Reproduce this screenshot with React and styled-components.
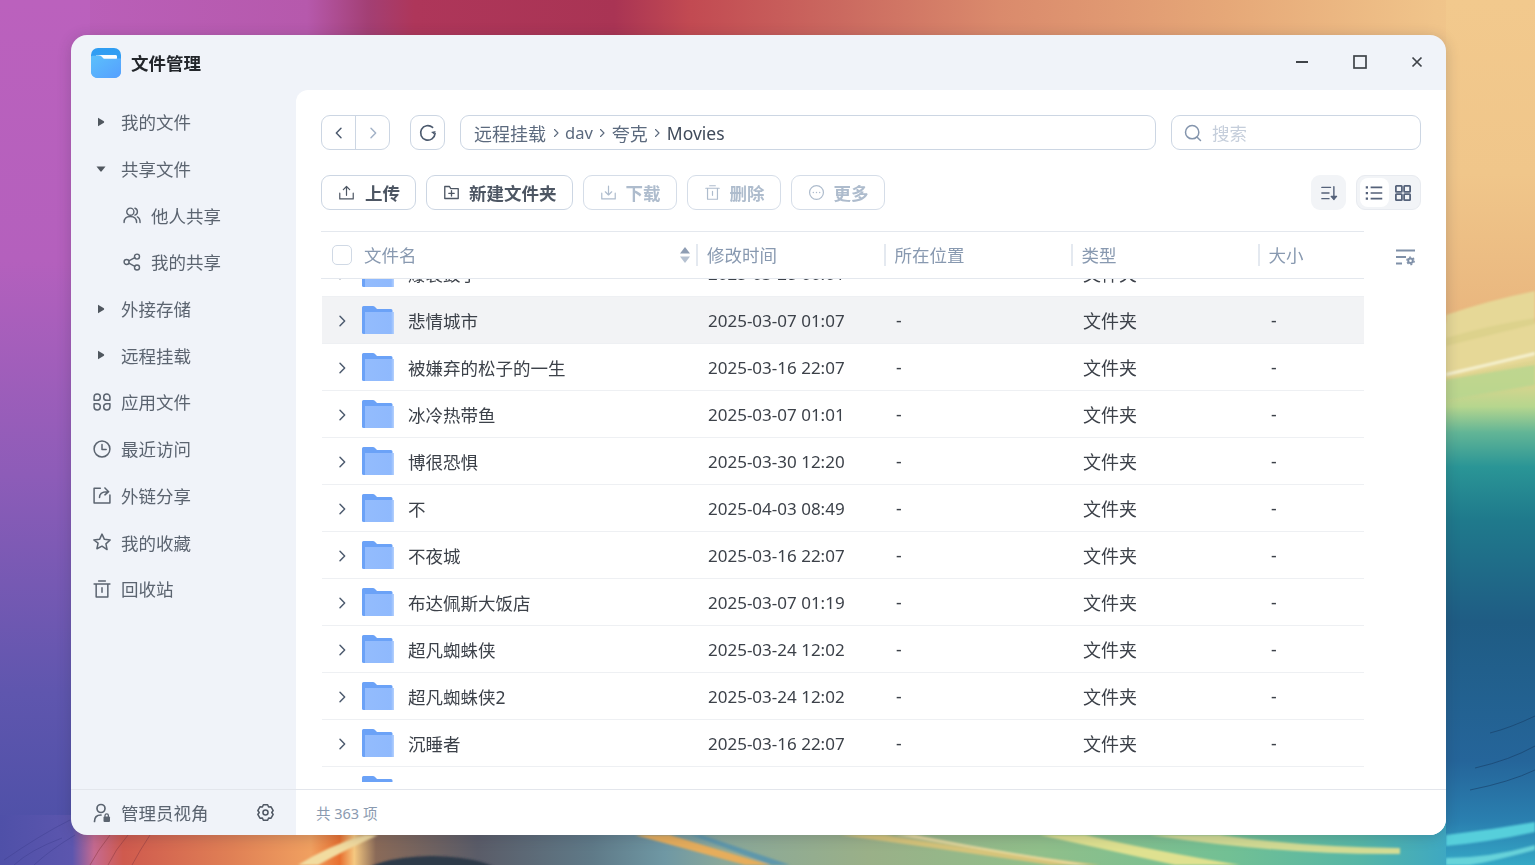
import React from "react";
import styled, { createGlobalStyle } from "styled-components";

const Global = createGlobalStyle`
  html, body { margin: 0; padding: 0; height: 100%; overflow: hidden; }
  body { font-family: "Noto Sans", "Noto Sans CJK SC", sans-serif; font-size: 17.5px; background: #4f50a8; }
  * { box-sizing: border-box; }
`;

const Desktop = styled.div`
  position: relative;
  height: 865px;
  padding: 35px 89px 30px 71px;
`;
const WallpaperSvg = styled.svg`
  position: absolute;
  left: 0;
  top: 0;
  width: 1535px;
  height: 865px;
`;
const Window = styled.div`
  position: relative;
  height: 800px;
  display: flex;
  flex-direction: column;
  background: #f0f3f9;
  border-radius: 16px;
  overflow: hidden;
  box-shadow: 0 2px 14px rgba(40, 40, 60, 0.22);
`;
const TitleBar = styled.header`
  height: 55px;
  flex: none;
  display: flex;
  align-items: center;
  padding: 0 20px;
`;
const AppName = styled.div`
  margin-left: 10px;
  font-weight: 700;
  color: #23262b;
  flex: 1;
`;
const WinButton = styled.button`
  width: 57.5px;
  height: 40px;
  padding: 0;
  border: 0;
  background: none;
  display: flex;
  align-items: center;
  justify-content: center;
  color: #3f4349;
`;
const WinControls = styled.div`
  display: flex;
  margin-right: -20px;
  margin-top: -2px;
`;
const Body = styled.div`
  flex: 1;
  min-height: 0;
  display: flex;
`;
const Sidebar = styled.nav`
  width: 225px;
  flex: none;
  padding-top: 8.5px;
`;
const NavItem = styled.div`
  height: 46.7px;
  display: flex;
  align-items: center;
  gap: ${(p) => (p.$tri ? 12 : 9)}px;
  padding-left: ${(p) => (p.$sub ? 51 : p.$tri ? 22 : 21)}px;
  color: #5b6470;
  svg { flex: none; }
`;
const Content = styled.main`
  flex: 1;
  min-width: 0;
  background: #fff;
  border-top-left-radius: 12px;
  padding: 25px 25px 0;
  display: flex;
  flex-direction: column;
`;
const TopRow = styled.div`
  display: flex;
  align-items: stretch;
  height: 35px;
  flex: none;
`;
const NavGroup = styled.div`
  width: 69px;
  display: flex;
  border: 1px solid #ccd6e3;
  border-radius: 9px;
`;
const NavBtn = styled.div`
  flex: 1;
  display: flex;
  align-items: center;
  justify-content: center;
  color: ${(p) => (p.$off ? "#a3b2c7" : "#4c5a6e")};
  & + & { border-left: 1px solid #ccd6e3; }
`;
const Refresh = styled.div`
  width: 35px;
  margin-left: 20px;
  display: flex;
  align-items: center;
  justify-content: center;
  border: 1px solid #ccd6e3;
  border-radius: 9px;
  color: #4c5a6e;
`;
const Breadcrumb = styled.div`
  flex: 1;
  margin-left: 15px;
  border: 1px solid #ccd6e3;
  border-radius: 9px;
  display: flex;
  align-items: center;
  padding-left: 13px;
  gap: 3.5px;
  color: #5c6a7e;
`;
const Crumb = styled.span`
  color: ${(p) => (p.$last ? "#3f4a5a" : "#5c6a7e")};
  font-size: ${(p) => p.$size ?? 18}px;
`;
const Sep = styled.span`
  display: flex;
  color: #5c6a7e;
`;
const Search = styled.div`
  width: 250px;
  margin-left: 15px;
  border: 1px solid #ccd6e3;
  border-radius: 9px;
  display: flex;
  align-items: center;
  padding-left: 11px;
  gap: 9px;
  color: #c5cedb;
  svg { color: #8495ad; }
`;
const ActionRow = styled.div`
  margin-top: 25px;
  height: 35px;
  flex: none;
  display: flex;
  gap: 10px;
`;
const ActionBtn = styled.div`
  display: flex;
  align-items: center;
  gap: ${(p) => p.$gap ?? 9}px;
  padding: 0 15px 0 16px;
  border: 1px solid ${(p) => (p.$off ? "#d5dde8" : "#ccd6e3")};
  border-radius: 9px;
  font-weight: 700;
  color: ${(p) => (p.$off ? "#aebccd" : "#4d5663")};
`;
const Spacer = styled.div`
  flex: 1;
`;
const SortBtn = styled.div`
  width: 35px;
  background: #f2f4f7;
  border-radius: 9px;
  display: flex;
  align-items: center;
  justify-content: center;
  color: #55627a;
`;
const ViewToggle = styled.div`
  width: 65px;
  background: #f2f4f7;
  border: 1px solid #e8ebf0;
  border-radius: 9px;
  padding: 2px 3px;
  display: flex;
  color: #55627a;
`;
const ViewBtn = styled.div`
  width: 30px;
  border-radius: 8px;
  background: ${(p) => (p.$on ? "#fff" : "transparent")};
  display: flex;
  align-items: center;
  justify-content: center;
`;
const TableArea = styled.div`
  margin-top: 21px;
  flex: 1;
  min-height: 0;
  display: flex;
`;
const Table = styled.div`
  width: 1043px;
  flex: none;
  display: flex;
  flex-direction: column;
`;
const SideTool = styled.div`
  flex: 1;
  height: 47px;
  display: flex;
  align-items: center;
  justify-content: flex-end;
  padding: 4px 5px 0 0;
  color: #7f90a8;
`;
const HeadRow = styled.div`
  height: 48px;
  flex: none;
  display: grid;
  grid-template-columns: 375px 187.500px 187px 187px 1fr;
  align-items: center;
  border-top: 1px solid #e4e8ee;
  border-bottom: 1px solid #e4e8ee;
  color: #8899b0;
`;
const HeadCell = styled.div`
  height: 22px;
  display: flex;
  align-items: center;
  padding-left: 9px;
  line-height: 22px;
  border-left: ${(p) => (p.$first ? "0" : "2px solid #e4e9f0")};
`;
const Check = styled.span`
  width: 20px;
  height: 20px;
  flex: none;
  border: 1.5px solid #d0d9e5;
  border-radius: 5px;
  margin-left: 2px;
  margin-right: 12px;
`;
const SortArrows = styled.svg`
  margin-left: auto;
  margin-right: 5px;
`;
const ListViewport = styled.div`
  height: 503px;
  flex: none;
  overflow: hidden;
`;
const List = styled.div`
  margin-top: -29px;
  padding-left: 1px;
`;
const Row = styled.div`
  height: 47px;
  display: grid;
  grid-template-columns: 375px 187px 187px 187px 1fr;
  align-items: center;
  border-bottom: 1px solid #eef0f3;
  background: ${(p) => (p.$hover ? "#f2f3f5" : "#fff")};
  color: #3c4149;
`;
const NameCell = styled.div`
  display: flex;
  align-items: center;
  padding-left: 12px;
  svg { flex: none; }
`;
const Chevron = styled.span`
  display: flex;
  color: #4c5a6e;
  margin-right: 12px;
  padding-top: 1px;
`;
const FolderName = styled.span`
  margin-left: 14px;
`;
const Cell = styled.div`
  padding-left: ${(p) => p.$pad ?? 12}px;
  font-size: ${(p) => p.$size ?? 17.5}px;
`;
const Footer = styled.footer`
  height: 46px;
  flex: none;
  display: flex;
  border-top: 1px solid #e3e6ec;
`;
const FootSide = styled.div`
  width: 225px;
  flex: none;
  display: flex;
  align-items: center;
  padding-left: 22px;
  gap: 10px;
  color: #5b6470;
`;
const FootGear = styled.span`
  display: flex;
  margin-left: 37px;
  color: #4f5763;
`;
const Status = styled.div`
  flex: 1;
  background: #fff;
  display: flex;
  align-items: center;
  padding-left: 20px;
  font-size: 14.5px;
  color: #8a9ab0;
`;

const Ic = ({ size = 20, w = 1.7, vb = 24, children, fill = "none" }) => (
  <svg width={size} height={size} viewBox={`0 0 ${vb} ${vb}`} fill={fill} stroke={fill === "none" ? "currentColor" : "none"} strokeWidth={w} strokeLinecap="round" strokeLinejoin="round">
    {children}
  </svg>
);

const TriRight = () => (
  <svg width="16" height="16" viewBox="0 0 16 16"><path d="M5 3.800 L10.900 7.300 Q11.500 8 10.900 8.700 L5 12.200 Z" fill="#50575f" /></svg>
);
const TriDown = () => (
  <svg width="16" height="16" viewBox="0 0 16 16"><path d="M3.500 5.500 H12.500 L8.700 10.300 Q8 11 7.300 10.300 Z" fill="#50575f" /></svg>
);
const Users = () => (
  <Ic><circle cx="10" cy="8" r="4.300" /><path d="M2.500 21c0-4.400 3-7.200 7.500-7.200s7.500 2.800 7.500 7.200" /><path d="M15.500 3.900a4.300 4.300 0 0 1 0 8.200M18.500 14.300c2 1 3.200 3.300 3.200 6.700" /></Ic>
);
const Share = () => (
  <Ic><circle cx="18" cy="5.500" r="3" /><circle cx="5.500" cy="12" r="3" /><circle cx="18" cy="18.500" r="3" /><path d="m8.200 10.600 7.200-3.800M8.200 13.400l7.200 3.800" /></Ic>
);
const Apps = () => (
  <Ic w={1.8}>
    <path d="M2.500 6.250a3.750 3.750 0 1 1 3.750 3.750H2.500zM21.500 6.250a3.750 3.750 0 1 0-3.750 3.750h3.750zM2.500 17.750a3.750 3.750 0 1 0 3.750-3.750H2.500zM21.500 17.750a3.750 3.750 0 1 1-3.750-3.750h3.750z" />
  </Ic>
);
const Clock = () => (
  <Ic w={1.8}><circle cx="12" cy="12" r="9.500" /><path d="M12 6.500V12.500H17" /></Ic>
);
const LinkShare = () => (
  <Ic w={1.8}><path d="M10 4H2.500V21.500H21.500V12" /><path d="M9 15c0-4 2.500-7 9-7M15.500 3.500 20 8l-4.500 3.800" /></Ic>
);
const Star = () => (
  <Ic w={1.8}><path d="m12 2.500 2.900 6.300 6.900.8-5.100 4.700 1.400 6.800L12 17l-6.100 3.100 1.400-6.800L2.200 9.600l6.900-.8z" /></Ic>
);
const Trash = () => (
  <Ic w={1.8}><path d="M2.500 6H21.500M8 2.500H16M5 6V21.500H19V6M12 10.500V16" /></Ic>
);
const ChevL = () => <Ic size={16} w={2.2}><path d="m15 5-7 7 7 7" /></Ic>;
const ChevR = () => <Ic size={16} w={2.2}><path d="m9 5 7 7-7 7" /></Ic>;
const Crumbsep = () => <Ic size={12} w={2.2}><path d="m9 5 7 7-7 7" /></Ic>;
const RefreshIc = () => (
  <Ic size={20} w={2}><path d="M20.500 12.500A8.700 8.700 0 1 1 17.500 5.300" /><path d="M21.300 9.500 19 13.500l-3.300-2.800" fill="currentColor" stroke="none" /></Ic>
);
const SearchIc = () => <Ic size={20} w={1.8}><circle cx="11" cy="11" r="8" /><path d="m17 17 4 4" /></Ic>;
const Upload = () => <Ic size={17}><path d="M2.500 13v8h19v-8M12 16V3.500M7.500 8 12 3.500 16.500 8" /></Ic>;
const NewFolder = () => <Ic size={17} w={1.9}><path d="M2.500 20.500V3.500H9L11 6.500H21.500V20.500ZM12 9.500V17M8.200 13.200H15.800" /></Ic>;
const Download = () => <Ic size={17}><path d="M2.500 13v8h19v-8M12 3v12.500M7.500 11 12 15.500 16.500 11" /></Ic>;
const TrashBtn = () => <Ic size={17}><path d="M2.500 6H21.500M8 2.500H16M5 6V21.500H19V6M12 10.500V16" /></Ic>;
const More = () => (
  <Ic size={17}><circle cx="12" cy="12" r="9.800" /><path d="M7.500 12h.01M12 12h.01M16.500 12h.01" strokeWidth="2" /></Ic>
);
const SortIc = () => (
  <Ic size={18} w={1.9}><path d="M2.500 4.500H14M2.500 12H12M2.500 19.500H12M18.500 3.500V20" /><path d="m15 16.500 3.500 4 3.500-4z" fill="currentColor" /></Ic>
);
const ListIc = () => (
  <svg width="18" height="18" viewBox="0 0 24 24" fill="none" stroke="currentColor" strokeWidth="2.300">
    <path d="M7.500 4.500H23M7.500 12H23M7.500 19.500H23" />
    <path d="M1 4.500H4M1 12H4M1 19.500H4" strokeWidth="3" />
  </svg>
);
const GridIc = () => (
  <Ic size={18} w={2.4}><rect x="2.500" y="2.500" width="8" height="8" rx=".8" /><rect x="13.500" y="2.500" width="8" height="8" rx=".8" /><rect x="2.500" y="13.500" width="8" height="8" rx=".8" /><rect x="13.500" y="13.500" width="8" height="8" rx=".8" /></Ic>
);
const ColumnGear = () => (
  <svg width="21" height="18" viewBox="0 0 21 18" fill="none" stroke="currentColor" strokeWidth="1.800">
    <path d="M1 2.500H20M1 9H11M1 15.500H7" />
    <circle cx="15.500" cy="12.800" r="2.300" strokeWidth="2" />
    <circle cx="15.500" cy="12.800" r="3.700" strokeWidth="1.400" strokeDasharray="2 1.880" />
  </svg>
);
const AdminIc = () => (
  <svg width="18" height="20" viewBox="0 0 18 20" fill="none" stroke="currentColor" strokeWidth="1.700" strokeLinecap="round">
    <circle cx="8" cy="5.500" r="4" />
    <path d="M1.500 18.500c0-4.500 2.500-6.500 6.500-6.500" />
    <rect x="10.500" y="13.500" width="6.500" height="5.500" rx="1" fill="currentColor" stroke="none" />
    <path d="M12 13.500v-1a1.700 1.700 0 0 1 3.400 0v1" strokeWidth="1.300" />
  </svg>
);
const Gear = () => (
  <Ic size={19} w={1.9}>
    <circle cx="12" cy="12" r="3.200" />
    <path d="M9.300 2.300h5.400l1.200 2.800 3.100-.3 2.700 4.700L19.900 12l1.800 2.500-2.700 4.700-3.100-.3-1.200 2.800H9.300l-1.200-2.800-3.100.3-2.700-4.700L4.100 12 2.300 9.500 5 4.800l3.100.3z" />
  </Ic>
);

const Logo = () => (
  <svg width="30" height="30" viewBox="0 0 30 30">
    <defs>
      <linearGradient id="lg" x1="0" y1="0" x2="0" y2="1">
        <stop offset="0" stopColor="#2f9df2" />
        <stop offset="1" stopColor="#3e9ff5" />
      </linearGradient>
      <linearGradient id="lf" x1="0" y1="0" x2="1" y2="1">
        <stop offset="0" stopColor="#5cc0fb" />
        <stop offset="1" stopColor="#559fff" />
      </linearGradient>
    </defs>
    <rect width="30" height="30" rx="7" fill="url(#lg)" />
    <path d="M5 7.500 H25.500 V11 H5 Z" fill="#f5f9fd" />
    <path d="M0 9 Q0 7.800 1.500 7.800 H10 L12.500 10.500 H30 V23 Q30 30 23 30 H7 Q0 30 0 23 Z" fill="url(#lf)" />
    <path d="M7 7 H24.500 Q26 7 26 8.500 V10.500 H13 L11 8.500 Q9 7 7 7Z" fill="#fbfdff" />
  </svg>
);

const Folder = () => (
  <svg width="32" height="28" viewBox="0 0 32 28">
    <defs>
      <linearGradient id="ff" x1="0" y1="0" x2="1" y2="0">
        <stop offset="0" stopColor="#93bcfd" />
        <stop offset="0.9" stopColor="#8fb9fd" />
        <stop offset="1" stopColor="#b5d1fd" />
      </linearGradient>
    </defs>
    <path d="M1.500 0 H11 Q12 0 12.800 .8 L15 3 H29 Q30.500 3 30.500 4.500 V8 H0 V1.500 Q0 0 1.500 0Z" fill="#6ba2f7" />
    <path d="M0 5 H3 V28 H1.500 Q0 28 0 26.500Z" fill="#6ba2f7" />
    <rect x="3" y="6" width="29" height="22" fill="url(#ff)" />
  </svg>
);

const Wallpaper = () => (
  <WallpaperSvg viewBox="0 0 1535 865" preserveAspectRatio="none">
    <defs>
      <filter id="soft" x="-5%" y="-5%" width="110%" height="110%"><feGaussianBlur stdDeviation="1.200" /></filter>
      <linearGradient id="top" x1="0" y1="0" x2="1" y2="0">
        <stop offset="0" stopColor="#bb61bd" />
        <stop offset="0.2" stopColor="#b659ac" />
        <stop offset="0.24" stopColor="#a33f74" />
        <stop offset="0.27" stopColor="#ae365a" />
        <stop offset="0.4" stopColor="#a93454" />
        <stop offset="0.45" stopColor="#c24a52" />
        <stop offset="0.55" stopColor="#cb6a60" />
        <stop offset="0.65" stopColor="#da8a6c" />
        <stop offset="0.8" stopColor="#e6a878" />
        <stop offset="0.935" stopColor="#f0c48a" />
        <stop offset="1" stopColor="#f2c98d" />
      </linearGradient>
      <linearGradient id="left" x1="0" y1="0" x2="0" y2="1">
        <stop offset="0" stopColor="#bb61bd" />
        <stop offset="0.3" stopColor="#b460bd" />
        <stop offset="0.55" stopColor="#8d5cb8" />
        <stop offset="0.8" stopColor="#5f56ae" />
        <stop offset="1" stopColor="#4a4fa6" />
      </linearGradient>
      <linearGradient id="right" x1="0" y1="0" x2="0" y2="1">
        <stop offset="0" stopColor="#f2c98d" />
        <stop offset="0.2" stopColor="#f0c68a" />
        <stop offset="0.37" stopColor="#e9b67e" />
        <stop offset="0.375" stopColor="#e4d596" />
        <stop offset="0.44" stopColor="#dcd48e" />
        <stop offset="0.47" stopColor="#b6d68e" />
        <stop offset="0.5" stopColor="#62b596" />
        <stop offset="0.54" stopColor="#2a9596" />
        <stop offset="0.6" stopColor="#1f7a8c" />
        <stop offset="0.72" stopColor="#1f5c84" />
        <stop offset="0.88" stopColor="#25659a" />
        <stop offset="0.95" stopColor="#2a80b0" />
        <stop offset="1" stopColor="#35a8c6" />
      </linearGradient>
      <linearGradient id="bottom" x1="0" y1="0" x2="1" y2="0">
        <stop offset="0" stopColor="#4f50a8" />
        <stop offset="0.05" stopColor="#5c56ae" />
        <stop offset="0.065" stopColor="#c56a90" />
        <stop offset="0.085" stopColor="#cf5a4e" />
        <stop offset="0.16" stopColor="#e08055" />
        <stop offset="0.215" stopColor="#f0a060" />
        <stop offset="0.235" stopColor="#e87030" />
        <stop offset="0.245" stopColor="#f5c880" />
        <stop offset="0.26" stopColor="#8a6a58" />
        <stop offset="0.33" stopColor="#5a5c68" />
        <stop offset="0.41" stopColor="#5f7a88" />
        <stop offset="0.46" stopColor="#6f98a4" />
        <stop offset="0.5" stopColor="#8aa89a" />
        <stop offset="0.6" stopColor="#9ab088" />
        <stop offset="0.72" stopColor="#90bf8a" />
        <stop offset="0.85" stopColor="#72c094" />
        <stop offset="0.94" stopColor="#56b6a6" />
        <stop offset="1" stopColor="#3ea8c2" />
      </linearGradient>
    </defs>
    <rect y="0" width="1535" height="60" fill="url(#top)" />
    <rect x="1446" y="0" width="89" height="865" fill="url(#right)" />
    <rect y="0" width="90" height="865" fill="url(#left)" />
    <g filter="url(#soft)">
      <path d="M1446 315 Q1490 300 1535 291 V360 L1446 378Z" fill="#e6d897" />
      <path d="M1446 338 Q1490 325 1535 318 V324 L1446 346Z" fill="#d8d088" opacity=".7" />
      <path d="M1446 373 Q1490 363 1535 352 V355 L1446 376Z" fill="#f6f2d0" />
      <path d="M1446 380 Q1490 372 1535 365 V385 L1446 400Z" fill="#b6d68e" opacity=".8" />
      <path d="M1446 835 Q1490 830 1535 822 V832 Q1490 842 1446 846Z" fill="#56cfdb" />
      <path d="M1446 858 Q1490 858 1535 845 V850 Q1490 862 1470 865 H1446Z" fill="#7de8e4" opacity=".7" />
    </g>
    <path d="M1535 716 Q1510 728 1490 733 M1535 746 Q1510 760 1475 768 M1535 770 Q1510 782 1470 790" stroke="#173d66" strokeWidth="1" opacity=".6" fill="none" />
    <rect y="815" width="1446" height="50" fill="url(#bottom)" />
    <g filter="url(#soft)">
      <path d="M635 835 H670 L770 865 H745Z" fill="#e6ad5c" />
      <path d="M690 835 H702 L790 865 H772Z" fill="#5f97ab" />
      <path d="M840 835 H885 Q980 850 1100 865 H1050 Q950 850 840 835Z" fill="#d6c47a" />
      <path d="M895 835 H915 Q1000 852 1090 865 H1075Z" fill="#ecdca0" />
      <path d="M1040 835 H1085 Q1150 850 1240 865 H1175Z" fill="#dfe190" />
      <path d="M1150 835 H1220 Q1300 847 1400 848 V854 Q1280 855 1150 835Z" fill="#d3dc94" />
      <ellipse cx="432" cy="878" rx="72" ry="22" fill="#2e3a4a" />
      <path d="M378 835 Q345 850 318 865 H298 Q330 845 365 835Z" fill="#f2dca0" />
    </g>
    <path d="M110 835 Q98 850 90 865 M128 835 Q115 850 108 865 M150 835 Q140 850 132 865" stroke="#8c3a42" strokeWidth="1" opacity=".5" fill="none" />
    <path d="M75 835 Q50 850 34 865 M62 838 Q30 850 14 865 M70 820 Q40 835 4 860" stroke="#3d3f8e" strokeWidth="1" opacity=".45" fill="none" />
  </WallpaperSvg>
);

const navA = [
  { t: "我的文件", i: <TriRight />, tri: 1 },
  { t: "共享文件", i: <TriDown />, tri: 1 },
  { t: "他人共享", i: <Users />, sub: 1 },
  { t: "我的共享", i: <Share />, sub: 1 },
  { t: "外接存储", i: <TriRight />, tri: 1 },
  { t: "远程挂载", i: <TriRight />, tri: 1 },
  { t: "应用文件", i: <Apps /> },
  { t: "最近访问", i: <Clock /> },
  { t: "外链分享", i: <LinkShare /> },
  { t: "我的收藏", i: <Star /> },
  { t: "回收站", i: <Trash /> },
];

const rows = [
  ["爆裂鼓手", "2025-03-28 00:01"],
  ["悲情城市", "2025-03-07 01:07", true],
  ["被嫌弃的松子的一生", "2025-03-16 22:07"],
  ["冰冷热带鱼", "2025-03-07 01:01"],
  ["博很恐惧", "2025-03-30 12:20"],
  ["不", "2025-04-03 08:49"],
  ["不夜城", "2025-03-16 22:07"],
  ["布达佩斯大饭店", "2025-03-07 01:19"],
  ["超凡蜘蛛侠", "2025-03-24 12:02"],
  ["超凡蜘蛛侠2", "2025-03-24 12:02"],
  ["沉睡者", "2025-03-16 22:07"],
  ["乘风破浪", "2025-03-16 22:07"],
];

export default function App() {
  return (
    <Desktop>
      <Global />
      <Wallpaper />
      <Window>
        <TitleBar>
          <Logo />
          <AppName>文件管理</AppName>
          <WinControls>
            <WinButton aria-label="minimize"><svg width="14" height="14" viewBox="0 0 14 14"><path d="M1 7H13" stroke="currentColor" strokeWidth="1.8" /></svg></WinButton>
            <WinButton aria-label="maximize"><svg width="14" height="14" viewBox="0 0 14 14"><rect x="1" y="1" width="12" height="12" fill="none" stroke="currentColor" strokeWidth="1.7" /></svg></WinButton>
            <WinButton aria-label="close"><svg width="14" height="14" viewBox="0 0 14 14"><path d="M2.500 2.500 11.500 11.500M11.500 2.500 2.500 11.500" stroke="currentColor" strokeWidth="1.7" /></svg></WinButton>
          </WinControls>
        </TitleBar>
        <Body>
          <Sidebar>
            {navA.map((n) => (
              <NavItem key={n.t} $sub={n.sub} $tri={n.tri}>{n.i}{n.t}</NavItem>
            ))}
          </Sidebar>
          <Content>
            <TopRow>
              <NavGroup>
                <NavBtn><ChevL /></NavBtn>
                <NavBtn $off><ChevR /></NavBtn>
              </NavGroup>
              <Refresh><RefreshIc /></Refresh>
              <Breadcrumb>
                <Crumb>远程挂载</Crumb><Sep><Crumbsep /></Sep>
                <Crumb $size={16.5}>dav</Crumb><Sep><Crumbsep /></Sep>
                <Crumb>夸克</Crumb><Sep><Crumbsep /></Sep>
                <Crumb $size={17.5} $last>Movies</Crumb>
              </Breadcrumb>
              <Search><SearchIc />搜索</Search>
            </TopRow>
            <ActionRow>
              <ActionBtn $gap={10}><Upload />上传</ActionBtn>
              <ActionBtn><NewFolder />新建文件夹</ActionBtn>
              <ActionBtn $off><Download />下载</ActionBtn>
              <ActionBtn $off><TrashBtn />删除</ActionBtn>
              <ActionBtn $off><More />更多</ActionBtn>
              <Spacer />
              <SortBtn><SortIc /></SortBtn>
              <ViewToggle>
                <ViewBtn $on><ListIc /></ViewBtn>
                <ViewBtn><GridIc /></ViewBtn>
              </ViewToggle>
            </ActionRow>
            <TableArea>
              <Table>
                <HeadRow>
                  <HeadCell $first>
                    <Check />文件名
                    <SortArrows width="12" height="18" viewBox="0 0 12 18">
                      <path d="M6 1 11 7.500H1Z" fill="#8e9db3" />
                      <path d="M6 17 11 10.500H1Z" fill="#b5c1d1" />
                    </SortArrows>
                  </HeadCell>
                  <HeadCell>修改时间</HeadCell>
                  <HeadCell>所在位置</HeadCell>
                  <HeadCell>类型</HeadCell>
                  <HeadCell>大小</HeadCell>
                </HeadRow>
                <ListViewport>
                  <List>
                    {rows.map(([name, date, hover]) => (
                      <Row key={name} $hover={hover}>
                        <NameCell>
                          <Chevron><ChevR /></Chevron>
                          <Folder />
                          <FolderName>{name}</FolderName>
                        </NameCell>
                        <Cell $pad={11} $size={17}>{date}</Cell>
                        <Cell>-</Cell>
                        <Cell $size={18}>文件夹</Cell>
                        <Cell $pad={13}>-</Cell>
                      </Row>
                    ))}
                  </List>
                </ListViewport>
              </Table>
              <SideTool><ColumnGear /></SideTool>
            </TableArea>
          </Content>
        </Body>
        <Footer>
          <FootSide>
            <AdminIc />管理员视角
            <FootGear><Gear /></FootGear>
          </FootSide>
          <Status>共 363 项</Status>
        </Footer>
      </Window>
    </Desktop>
  );
}
